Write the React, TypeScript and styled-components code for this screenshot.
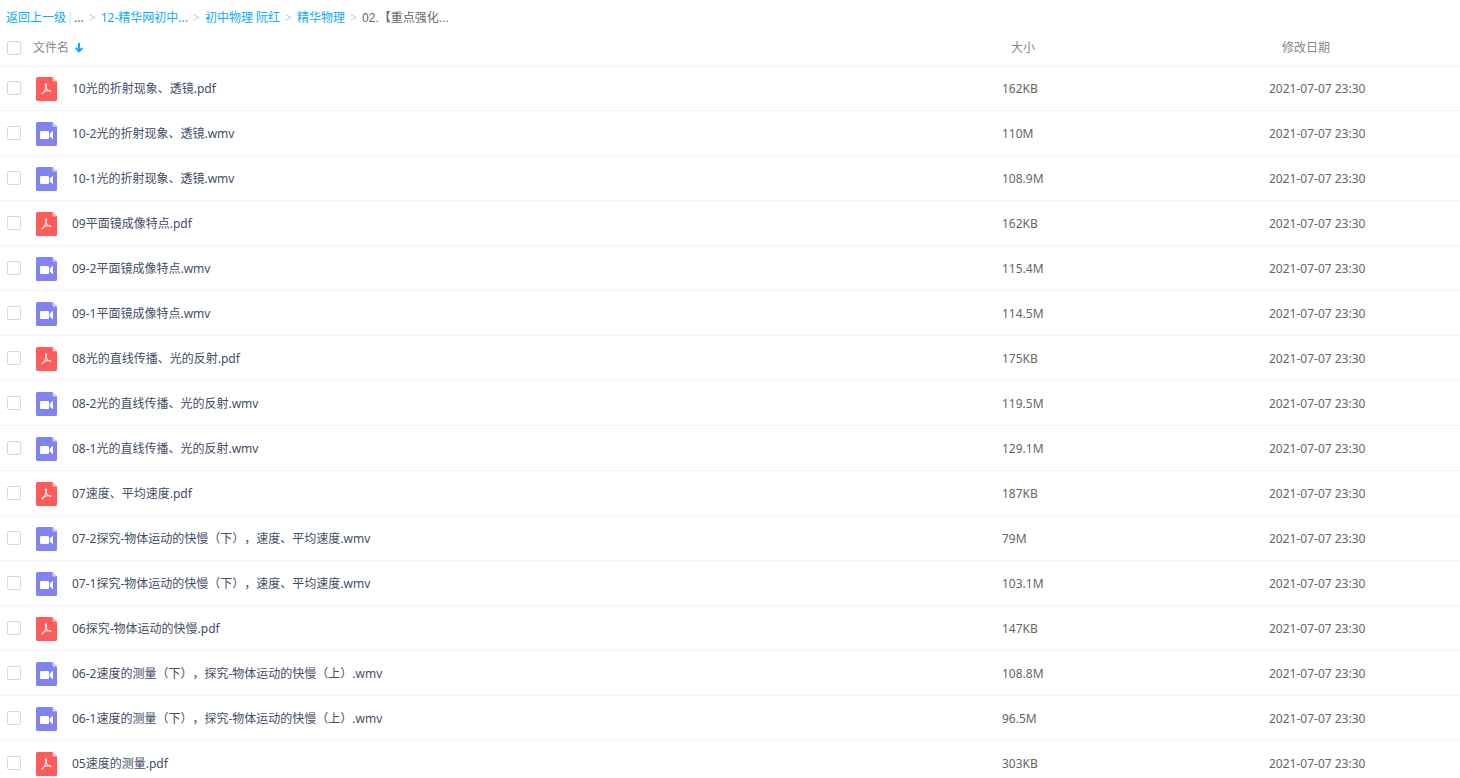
import React from "react";
import styled, { createGlobalStyle } from "styled-components";

const GlobalStyle = createGlobalStyle`
  * { box-sizing: border-box; }
  body {
    margin: 0;
    overflow-x: hidden;
    background: #fff;
    color: #666;
    font: 12px/18px "Noto Sans", "Noto Sans CJK SC", sans-serif;
    text-spacing-trim: space-all;
  }
`;

const Breadcrumb = styled.nav`
  display: flex;
  align-items: center;
  height: 30px;
  padding: 6px 6px 0;
  white-space: nowrap;
`;

const Crumb = styled.a`
  color: #09aaff;
  text-decoration: none;
`;

const CurrentCrumb = styled.span`
  font-family: "Liberation Sans", "Noto Sans CJK SC", sans-serif;
`;

const Divider = styled.span`
  width: 8px;
  color: #c4d8f0;
  text-align: center;
`;

const Chevron = styled.span`
  width: 17px;
  color: #b9cdf0;
  text-align: center;
`;

const Table = styled.table`
  width: 100%;
  table-layout: fixed;
  border-spacing: 0;
  border-collapse: separate;
`;

const CheckCol = styled.col`
  width: 32px;
`;
const SizeCol = styled.col`
  width: 267px;
`;
const DateCol = styled.col`
  width: 191px;
`;

const HeadCell = styled.th<{ $indent?: number }>`
  height: 36px;
  padding: 0 0 0 ${(p) => p.$indent ?? 0}px;
  box-shadow: 0 1px 0 #f0f4fd;
  color: #888;
  font-weight: 400;
  text-align: left;
`;

const SortButton = styled.button`
  display: flex;
  align-items: center;
  gap: 6px;
  padding: 0;
  border: 0;
  background: none;
  color: inherit;
  font: inherit;
  cursor: pointer;
`;

const Cell = styled.td`
  height: 45px;
  padding: 1px 0 0;
  border-bottom: 1px solid #f0f4fd;
  white-space: nowrap;
`;

const CheckCell = styled(Cell)`
  padding: 0;
`;

const Checkbox = styled.input`
  display: block;
  width: 14px;
  height: 14px;
  margin: 0 0 0 7px;
  appearance: none;
  border: 1px solid #d3d9e6;
  border-radius: 2px;
  background: #fff;
  &:checked { background: #09aaff; }
`;

const FileName = styled.label`
  display: flex;
  align-items: center;
  gap: 15px;
  padding-left: 4px;
  color: #424e67;
  svg { flex: none; }
`;

type Kind = "pdf" | "wmv";

function FileIcon({ kind }: { kind: Kind }) {
  const pdf = kind === "pdf";
  return (
    <svg width="21" height="24" viewBox="0 0 21 24" aria-hidden="true">
      <path d="M1.500 0H16.500L21 4.500V22.500a1.500 1.500 0 0 1-1.500 1.500h-18A1.500 1.500 0 0 1 0 22.500v-21A1.500 1.500 0 0 1 1.500 0z" fill={pdf ? "#ff5b5b" : "#8183f1"} />
      <path d="M16.500 0L21 4.500h-3.500a1 1 0 0 1-1-1z" fill={pdf ? "#ffbdbd" : "#cdcdfa"} />
      {pdf ? (
        <path
          d="M9.500 6.800q.9-.6 1.100.6c0 2.300-1.600 6.600-3.600 9.200-.6.800-1.500.7-1.300-.2.600-1.300 4.300-2.700 7.800-2.900 1.300 0 1.900.4 1.600.9-.6.700-2.100-.2-3.300-1.500-1.500-1.700-2.900-4.700-2.300-6.100z"
          fill="none"
          stroke="#fff"
          strokeWidth="1"
          strokeLinejoin="round"
        />
      ) : (
        <>
          <rect x="4" y="9" width="9" height="8" rx="1.200" fill="#fff" />
          <path d="M13.800 11.800l2.400-2.500q.8-.5.800.4v6.600q0 .9-.8.400l-2.400-2.500z" fill="#fff" />
        </>
      )}
    </svg>
  );
}

const files: [string, string][] = [
  ["10光的折射现象、透镜.pdf", "162KB"],
  ["10-2光的折射现象、透镜.wmv", "110M"],
  ["10-1光的折射现象、透镜.wmv", "108.9M"],
  ["09平面镜成像特点.pdf", "162KB"],
  ["09-2平面镜成像特点.wmv", "115.4M"],
  ["09-1平面镜成像特点.wmv", "114.5M"],
  ["08光的直线传播、光的反射.pdf", "175KB"],
  ["08-2光的直线传播、光的反射.wmv", "119.5M"],
  ["08-1光的直线传播、光的反射.wmv", "129.1M"],
  ["07速度、平均速度.pdf", "187KB"],
  ["07-2探究-物体运动的快慢（下），速度、平均速度.wmv", "79M"],
  ["07-1探究-物体运动的快慢（下），速度、平均速度.wmv", "103.1M"],
  ["06探究-物体运动的快慢.pdf", "147KB"],
  ["06-2速度的测量（下），探究-物体运动的快慢（上）.wmv", "108.8M"],
  ["06-1速度的测量（下），探究-物体运动的快慢（上）.wmv", "96.5M"],
  ["05速度的测量.pdf", "303KB"],
];

export default function App() {
  return (
    <main lang="zh-CN">
      <GlobalStyle />
      <Breadcrumb aria-label="路径">
        <Crumb href="#up">返回上一级</Crumb>
        <Divider>|</Divider>
        <span>...</span>
        <Chevron>&gt;</Chevron>
        <Crumb href="#course">12-精华网初中...</Crumb>
        <Chevron>&gt;</Chevron>
        <Crumb href="#teacher">初中物理 阮红</Crumb>
        <Chevron>&gt;</Chevron>
        <Crumb href="#physics">精华物理</Crumb>
        <Chevron>&gt;</Chevron>
        <CurrentCrumb aria-current="page">02.【重点强化...</CurrentCrumb>
      </Breadcrumb>
      <Table>
        <colgroup>
          <CheckCol />
          <col />
          <SizeCol />
          <DateCol />
        </colgroup>
        <thead>
          <tr>
            <HeadCell><Checkbox type="checkbox" aria-label="全选" /></HeadCell>
            <HeadCell $indent={1} aria-sort="descending">
              <SortButton type="button">
                文件名
                <svg width="8" height="10" viewBox="0 0 8 10" aria-hidden="true">
                  <path d="M4 0v8M.700 5L4 8.300 7.300 5" fill="none" stroke="#09aaff" strokeWidth="2" />
                </svg>
              </SortButton>
            </HeadCell>
            <HeadCell $indent={9}>大小</HeadCell>
            <HeadCell $indent={13}>修改日期</HeadCell>
          </tr>
        </thead>
        <tbody>
          {files.map(([name, size], i) => (
            <tr key={name}>
              <CheckCell><Checkbox type="checkbox" id={`file-${i}`} /></CheckCell>
              <Cell>
                <FileName htmlFor={`file-${i}`}>
                  <FileIcon kind={name.endsWith("pdf") ? "pdf" : "wmv"} />
                  {name}
                </FileName>
              </Cell>
              <Cell>{size}</Cell>
              <Cell>2021-07-07 23:30</Cell>
            </tr>
          ))}
        </tbody>
      </Table>
    </main>
  );
}
